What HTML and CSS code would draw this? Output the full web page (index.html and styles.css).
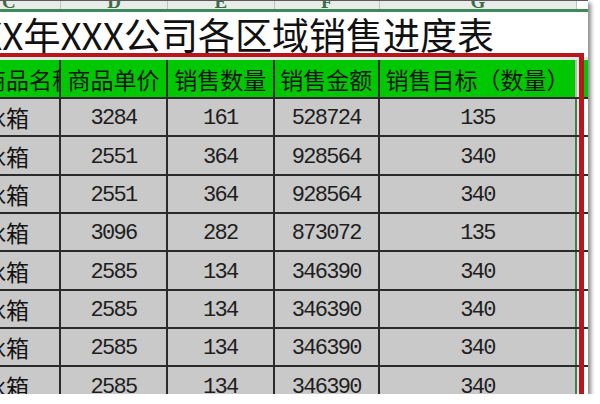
FILE: index.html
```html
<!DOCTYPE html>
<html lang="zh-CN">
<head>
<meta charset="utf-8">
<title>销售进度表</title>
<link rel="stylesheet" href="styles.css">
</head>
<body>
<div class="frame">
  <div class="colhead">
    <div class="ch first"><span>C</span></div>
    <div class="ch"><span>D</span></div>
    <div class="ch"><span>E</span></div>
    <div class="ch"><span>F</span></div>
    <div class="ch"><span>G</span></div>
    <div class="ch last"></div>
  </div>
  <div class="title">XX年XXX公司各区域销售进度表</div>
  <div class="row head">
    <div class="cell first"><span>商品名称</span></div>
    <div class="cell">商品单价</div>
    <div class="cell">销售数量</div>
    <div class="cell">销售金额</div>
    <div class="cell g">销售目标（数量）</div>
    <div class="cell h"></div>
  </div>
  <div class="row data">
    <div class="cell first"><span>冰箱</span></div>
    <div class="cell num">3284</div>
    <div class="cell num">161</div>
    <div class="cell num">528724</div>
    <div class="cell num g">135</div>
    <div class="cell h"></div>
  </div>
  <div class="row data">
    <div class="cell first"><span>冰箱</span></div>
    <div class="cell num">2551</div>
    <div class="cell num">364</div>
    <div class="cell num">928564</div>
    <div class="cell num g">340</div>
    <div class="cell h"></div>
  </div>
  <div class="row data">
    <div class="cell first"><span>冰箱</span></div>
    <div class="cell num">2551</div>
    <div class="cell num">364</div>
    <div class="cell num">928564</div>
    <div class="cell num g">340</div>
    <div class="cell h"></div>
  </div>
  <div class="row data">
    <div class="cell first"><span>冰箱</span></div>
    <div class="cell num">3096</div>
    <div class="cell num">282</div>
    <div class="cell num">873072</div>
    <div class="cell num g">135</div>
    <div class="cell h"></div>
  </div>
  <div class="row data">
    <div class="cell first"><span>冰箱</span></div>
    <div class="cell num">2585</div>
    <div class="cell num">134</div>
    <div class="cell num">346390</div>
    <div class="cell num g">340</div>
    <div class="cell h"></div>
  </div>
  <div class="row data">
    <div class="cell first"><span>冰箱</span></div>
    <div class="cell num">2585</div>
    <div class="cell num">134</div>
    <div class="cell num">346390</div>
    <div class="cell num g">340</div>
    <div class="cell h"></div>
  </div>
  <div class="row data">
    <div class="cell first"><span>冰箱</span></div>
    <div class="cell num">2585</div>
    <div class="cell num">134</div>
    <div class="cell num">346390</div>
    <div class="cell num g">340</div>
    <div class="cell h"></div>
  </div>
  <div class="row data">
    <div class="cell first"><span>冰箱</span></div>
    <div class="cell num">2585</div>
    <div class="cell num">134</div>
    <div class="cell num">346390</div>
    <div class="cell num g">340</div>
    <div class="cell h"></div>
  </div>
  <div class="redbox"></div>
</div>
</body>
</html>
```

FILE: styles.css
```css
html, body {
  margin: 0;
  padding: 0;
  background: #ffffff;
}

.frame {
  position: relative;
  width: 588px;
  height: 394px;
  overflow: hidden;
  background: #ffffff;
  box-shadow: 3px 3px 4px rgba(0, 0, 0, 0.45);
}

.colhead {
  display: grid;
  grid-template-columns: 61px 107px 106.5px 105.5px 197px 1fr;
  height: 12px;
  box-sizing: border-box;
  border-top: 1px solid #5a5a5a;
  border-bottom: 3px solid #3d8a59;
  background: #e8ebe8;
}

.ch {
  display: flex;
  justify-content: center;
  align-items: flex-end;
  overflow: hidden;
  border-right: 1px solid #bcc6bd;
  font: bold 19px "Liberation Serif", serif;
  color: #3b6b4b;
}

.ch.first {
  justify-content: flex-start;
  padding-left: 2px;
}

.ch.last {
  border-right: none;
  background: #ffffff;
}

.ch span {
  line-height: 19px;
  margin-bottom: -2px;
}

.title {
  height: 45px;
  margin-left: -19px;
  font: 37px "Noto Sans CJK SC", sans-serif;
  line-height: 45px;
  white-space: nowrap;
  color: #111111;
}

.row {
  display: grid;
  grid-template-columns: 61px 107px 106.5px 105.5px 197px 1fr;
  box-sizing: border-box;
  border-bottom: 2px solid #2b2b2b;
}

.head {
  height: 42px;
  border-top: 3px solid #e1e7e1;
  background: #00c800;
}

.data {
  height: 38.35px;
}

.cell {
  display: flex;
  align-items: center;
  justify-content: center;
  overflow: hidden;
  white-space: nowrap;
  box-sizing: border-box;
  border-right: 2px solid #2b2b2b;
  font: 23px "Noto Sans CJK SC", sans-serif;
  color: #141414;
}

.data .cell {
  background: #c9c9c9;
}

.cell.first {
  justify-content: flex-start;
}

.cell.first span {
  margin-left: -17px;
}

.cell.num {
  padding-top: 3px;
  font: 22px "Liberation Mono", monospace;
  letter-spacing: -1.7px;
  color: #1e1e1e;
}

.cell.g {
  border-right: 2px solid #3f7f4f;
}

.head .cell.g {
  border-right-color: #a9c3ab;
}

.cell.h {
  border-right: none;
  border-left: 2px solid #dbe8e4;
}

.data .cell.h {
  background: #ffffff;
}

.redbox {
  position: absolute;
  left: -10px;
  top: 53px;
  width: 594px;
  height: 400px;
  box-sizing: border-box;
  border-style: solid;
  border-color: #b8161c;
  border-width: 4px 5px;
}
```
